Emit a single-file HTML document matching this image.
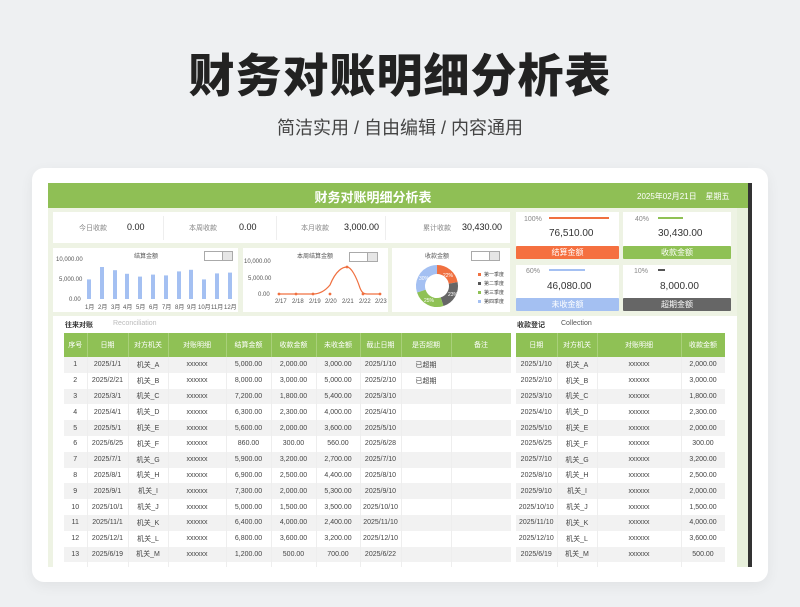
<!DOCTYPE html>
<html><head><meta charset="utf-8"><style>
*{margin:0;padding:0;box-sizing:border-box}
body{width:800px;height:607px;background:#eef0f2;font-family:"Liberation Sans","Noto Sans CJK SC",sans-serif;position:relative;overflow:hidden;color:#333}
.a{position:absolute}
h1{position:absolute;left:0;width:800px;top:40px;text-align:center;font-size:46px;font-weight:900;color:#222;letter-spacing:1px;font-family:"Noto Sans CJK SC",sans-serif}
.sub{position:absolute;left:0;width:800px;top:114px;text-align:center;font-size:18px;color:#444}
.card{left:32px;top:168px;width:736px;height:414px;background:#fff;border-radius:12px;box-shadow:0 4px 14px rgba(0,0,0,.06)}
.sheet{left:48px;top:183px;width:700px;height:384px;background:#eef3e4;overflow:hidden}
.hdr{left:48px;top:183px;width:700px;height:25px;background:#8fbf55;color:#fff}
.wb{background:#fff}
.lbl{font-size:7px;color:#888}
.val{font-size:9px;color:#222}
table{border-collapse:collapse;font-size:7px;color:#444;table-layout:fixed}
th{background:#8fc155;color:#fff;font-weight:normal;height:24px;border-right:1px solid #a9d07a;font-size:7px}
td{height:15.8px;text-align:center;border-right:1px solid #eee;white-space:nowrap}
tr:nth-child(even) td{background:#f2f2f2}
tr:nth-child(odd) td{background:#fff}
.btn{font-size:8px;color:#fff;text-align:center;line-height:13px;border-radius:1px}
.dd{width:29px;height:10px;border:1px solid #aaa;background:#fff}
.dd:after{content:"";position:absolute;right:0;top:0;width:9px;height:8px;background:#e6e6e6;border-left:1px solid #aaa}
</style></head><body>
<h1>财务对账明细分析表</h1>
<div class="sub">简洁实用 / 自由编辑 / 内容通用</div>
<div class="a card"></div>
<div class="a sheet"></div>
<div class="a" style="left:737px;top:208px;width:11px;height:359px;background:#e8f0dc"></div>
<div class="a" style="left:748px;top:183px;width:4px;height:384px;background:#333"></div>
<div class="a hdr"><div class="a" style="left:0;width:650px;top:4px;text-align:center;font-size:13px;font-weight:bold">财务对账明细分析表</div>
<div class="a" style="left:589px;top:8px;font-size:8px">2025年02月21日 &nbsp;&nbsp; 星期五</div></div>

<div class="a wb" style="left:53px;top:212px;width:457px;height:31px"></div>
<div class="a" style="left:163px;top:216px;width:1px;height:24px;background:#eee"></div>
<div class="a" style="left:276px;top:216px;width:1px;height:24px;background:#eee"></div>
<div class="a" style="left:385px;top:216px;width:1px;height:24px;background:#eee"></div>
<div class="a lbl" style="left:79px;top:223px">今日收款</div><div class="a val" style="left:127px;top:222px">0.00</div>
<div class="a lbl" style="left:189px;top:223px">本周收款</div><div class="a val" style="left:239px;top:222px">0.00</div>
<div class="a lbl" style="left:301px;top:223px">本月收款</div><div class="a val" style="left:344px;top:222px">3,000.00</div>
<div class="a lbl" style="left:423px;top:223px">累计收款</div><div class="a val" style="left:462px;top:222px">30,430.00</div>

<div class="a wb" style="left:53px;top:248px;width:185px;height:64px"></div>
<div class="a wb" style="left:243px;top:248px;width:145px;height:64px"></div>
<div class="a wb" style="left:392px;top:248px;width:118px;height:64px"></div>
<div class="a dd" style="left:204px;top:251px"></div>
<div class="a dd" style="left:349px;top:252px"></div>
<div class="a dd" style="left:471px;top:251px"></div>
<svg class="a" style="left:0;top:0" width="800" height="607" font-family="Liberation Sans,Noto Sans CJK SC,sans-serif">
<g font-size="6" fill="#555">
<text x="134" y="258">结算金额</text><text x="297" y="258">本周结算金额</text><text x="425" y="258">收款金额</text>
<text x="56" y="261">10,000.00</text><text x="59" y="281">5,000.00</text><text x="69" y="301">0.00</text>
<text x="244" y="263">10,000.00</text><text x="248" y="280">5,000.00</text><text x="258" y="296">0.00</text>
</g>
<g fill="#a4c0f2">
<rect x="87" y="279.4" width="4" height="19.6"/><rect x="100" y="267" width="4" height="32"/><rect x="113" y="270.2" width="4" height="28.8"/><rect x="125" y="273.8" width="4" height="25.2"/><rect x="138" y="276.6" width="4" height="22.4"/><rect x="151" y="274.6" width="4" height="24.4"/><rect x="164" y="275.4" width="4" height="23.6"/><rect x="177" y="271.4" width="4" height="27.6"/><rect x="189" y="269.8" width="4" height="29.2"/><rect x="202" y="279.4" width="4" height="19.6"/><rect x="215" y="273.4" width="4" height="25.6"/><rect x="228" y="272.6" width="4" height="26.4"/>
</g>
<g font-size="6" fill="#555"><text x="85" y="309">1月</text><text x="98" y="309">2月</text><text x="111" y="309">3月</text><text x="123" y="309">4月</text><text x="136" y="309">5月</text><text x="149" y="309">6月</text><text x="162" y="309">7月</text><text x="175" y="309">8月</text><text x="187" y="309">9月</text><text x="198" y="309">10月</text><text x="211" y="309">11月</text><text x="224" y="309">12月</text></g>
<path d="M279 294 L313 294 C320 294 325 291 330 285 C336 270 343 267 347 267 C351 267 356 276 360 288 C362 293 364 294 367 294 L380 294" fill="none" stroke="#f07040" stroke-width="1.2"/>
<g fill="#f07040"><circle cx="279" cy="294" r="1.4"/><circle cx="296" cy="294" r="1.4"/><circle cx="313" cy="294" r="1.4"/><circle cx="330" cy="294" r="1.4"/><circle cx="347" cy="267" r="1.4"/><circle cx="363" cy="294" r="1.4"/><circle cx="380" cy="294" r="1.4"/></g>
<g font-size="6" fill="#555"><text x="275" y="303">2/17</text><text x="292" y="303">2/18</text><text x="309" y="303">2/19</text><text x="325" y="303">2/20</text><text x="342" y="303">2/21</text><text x="359" y="303">2/22</text><text x="375" y="303">2/23</text></g>
<g fill="none" stroke-width="9">
<circle cx="437" cy="286" r="16.5" stroke="#f07040" stroke-dasharray="22.8 200" transform="rotate(-90 437 286)"/>
<circle cx="437" cy="286" r="16.5" stroke="#666" stroke-dasharray="23.8 200" transform="rotate(-10.8 437 286)"/>
<circle cx="437" cy="286" r="16.5" stroke="#8fc155" stroke-dasharray="25.9 200" transform="rotate(72 437 286)"/>
<circle cx="437" cy="286" r="16.5" stroke="#a4c0f2" stroke-dasharray="31.1 200" transform="rotate(162 437 286)"/>
</g>
<g font-size="5" fill="#fff"><text x="443" y="277">22%</text><text x="448" y="296">23%</text><text x="424" y="302">25%</text><text x="419" y="280">30%</text></g>
<g font-size="5" fill="#444"><text x="484" y="276">第一季度</text><text x="484" y="285">第二季度</text><text x="484" y="294">第三季度</text><text x="484" y="303">第四季度</text></g>
<rect x="478" y="273" width="3" height="3" fill="#f07040"/><rect x="478" y="282" width="3" height="3" fill="#555"/><rect x="478" y="291" width="3" height="3" fill="#8fc155"/><rect x="478" y="300" width="3" height="3" fill="#a4c0f2"/>
</svg>

<div class="a wb" style="left:516px;top:212px;width:103px;height:34px"></div>
<div class="a wb" style="left:623px;top:212px;width:108px;height:34px"></div>
<div class="a wb" style="left:516px;top:265px;width:103px;height:33px"></div>
<div class="a wb" style="left:623px;top:265px;width:108px;height:33px"></div>
<div class="a lbl" style="left:524px;top:216px">100%</div><div class="a" style="left:549px;top:217px;width:60px;height:2px;background:#f07040"></div>
<div class="a lbl" style="left:635px;top:216px">40%</div><div class="a" style="left:658px;top:217px;width:25px;height:2px;background:#8fc155"></div>
<div class="a lbl" style="left:526px;top:268px">60%</div><div class="a" style="left:549px;top:269px;width:36px;height:2px;background:#a4c0f2"></div>
<div class="a lbl" style="left:634px;top:268px">10%</div><div class="a" style="left:658px;top:269px;width:7px;height:2px;background:#555"></div>
<div class="a" style="left:549px;top:228px;font-size:10px">76,510.00</div>
<div class="a" style="left:658px;top:228px;font-size:10px">30,430.00</div>
<div class="a" style="left:547px;top:281px;font-size:10px">46,080.00</div>
<div class="a" style="left:660px;top:281px;font-size:10px">8,000.00</div>
<div class="a btn" style="left:516px;top:246px;width:103px;background:#f57040">结算金额</div>
<div class="a btn" style="left:623px;top:246px;width:108px;background:#8fc155">收款金额</div>
<div class="a btn" style="left:516px;top:298px;width:103px;background:#a4c0f2">未收金额</div>
<div class="a btn" style="left:623px;top:298px;width:108px;background:#666">超期金额</div>

<div class="a wb" style="left:53px;top:316px;width:684px;height:251px"></div>
<div class="a" style="left:65px;top:320px;font-size:7px;font-weight:bold">往来对账</div>
<div class="a" style="left:113px;top:320px;font-size:7px;color:#bbb">Reconciliation</div>
<div class="a" style="left:517px;top:320px;font-size:7px;font-weight:bold">收款登记</div>
<div class="a" style="left:561px;top:320px;font-size:7px;color:#555">Collection</div>

<div class="a" style="left:64px;top:333px;width:447px;height:234px;overflow:hidden">
<table style="width:447px"><colgroup><col style="width:23px"><col style="width:41px"><col style="width:40px"><col style="width:58px"><col style="width:45px"><col style="width:45px"><col style="width:44px"><col style="width:41px"><col style="width:50px"><col style="width:60px"></colgroup>
<tr><th>序号</th><th>日期</th><th>对方机关</th><th>对账明细</th><th>结算金额</th><th>收款金额</th><th>未收金额</th><th>截止日期</th><th>是否超期</th><th>备注</th></tr>
<tr><td>1</td><td>2025/1/1</td><td>机关_A</td><td>xxxxxx</td><td>5,000.00</td><td>2,000.00</td><td>3,000.00</td><td>2025/1/10</td><td>已超期</td><td></td></tr>
<tr><td>2</td><td>2025/2/21</td><td>机关_B</td><td>xxxxxx</td><td>8,000.00</td><td>3,000.00</td><td>5,000.00</td><td>2025/2/10</td><td>已超期</td><td></td></tr>
<tr><td>3</td><td>2025/3/1</td><td>机关_C</td><td>xxxxxx</td><td>7,200.00</td><td>1,800.00</td><td>5,400.00</td><td>2025/3/10</td><td></td><td></td></tr>
<tr><td>4</td><td>2025/4/1</td><td>机关_D</td><td>xxxxxx</td><td>6,300.00</td><td>2,300.00</td><td>4,000.00</td><td>2025/4/10</td><td></td><td></td></tr>
<tr><td>5</td><td>2025/5/1</td><td>机关_E</td><td>xxxxxx</td><td>5,600.00</td><td>2,000.00</td><td>3,600.00</td><td>2025/5/10</td><td></td><td></td></tr>
<tr><td>6</td><td>2025/6/25</td><td>机关_F</td><td>xxxxxx</td><td>860.00</td><td>300.00</td><td>560.00</td><td>2025/6/28</td><td></td><td></td></tr>
<tr><td>7</td><td>2025/7/1</td><td>机关_G</td><td>xxxxxx</td><td>5,900.00</td><td>3,200.00</td><td>2,700.00</td><td>2025/7/10</td><td></td><td></td></tr>
<tr><td>8</td><td>2025/8/1</td><td>机关_H</td><td>xxxxxx</td><td>6,900.00</td><td>2,500.00</td><td>4,400.00</td><td>2025/8/10</td><td></td><td></td></tr>
<tr><td>9</td><td>2025/9/1</td><td>机关_I</td><td>xxxxxx</td><td>7,300.00</td><td>2,000.00</td><td>5,300.00</td><td>2025/9/10</td><td></td><td></td></tr>
<tr><td>10</td><td>2025/10/1</td><td>机关_J</td><td>xxxxxx</td><td>5,000.00</td><td>1,500.00</td><td>3,500.00</td><td>2025/10/10</td><td></td><td></td></tr>
<tr><td>11</td><td>2025/11/1</td><td>机关_K</td><td>xxxxxx</td><td>6,400.00</td><td>4,000.00</td><td>2,400.00</td><td>2025/11/10</td><td></td><td></td></tr>
<tr><td>12</td><td>2025/12/1</td><td>机关_L</td><td>xxxxxx</td><td>6,800.00</td><td>3,600.00</td><td>3,200.00</td><td>2025/12/10</td><td></td><td></td></tr>
<tr><td>13</td><td>2025/6/19</td><td>机关_M</td><td>xxxxxx</td><td>1,200.00</td><td>500.00</td><td>700.00</td><td>2025/6/22</td><td></td><td></td></tr>
<tr><td>&nbsp;</td><td></td><td></td><td></td><td></td><td></td><td></td><td></td><td></td><td></td></tr>
</table></div>

<div class="a" style="left:516px;top:333px;width:209px;height:234px;overflow:hidden">
<table style="width:209px"><colgroup><col style="width:41px"><col style="width:40px"><col style="width:84px"><col style="width:44px"></colgroup>
<tr><th>日期</th><th>对方机关</th><th>对账明细</th><th>收款金额</th></tr>
<tr><td>2025/1/10</td><td>机关_A</td><td>xxxxxx</td><td>2,000.00</td></tr>
<tr><td>2025/2/10</td><td>机关_B</td><td>xxxxxx</td><td>3,000.00</td></tr>
<tr><td>2025/3/10</td><td>机关_C</td><td>xxxxxx</td><td>1,800.00</td></tr>
<tr><td>2025/4/10</td><td>机关_D</td><td>xxxxxx</td><td>2,300.00</td></tr>
<tr><td>2025/5/10</td><td>机关_E</td><td>xxxxxx</td><td>2,000.00</td></tr>
<tr><td>2025/6/25</td><td>机关_F</td><td>xxxxxx</td><td>300.00</td></tr>
<tr><td>2025/7/10</td><td>机关_G</td><td>xxxxxx</td><td>3,200.00</td></tr>
<tr><td>2025/8/10</td><td>机关_H</td><td>xxxxxx</td><td>2,500.00</td></tr>
<tr><td>2025/9/10</td><td>机关_I</td><td>xxxxxx</td><td>2,000.00</td></tr>
<tr><td>2025/10/10</td><td>机关_J</td><td>xxxxxx</td><td>1,500.00</td></tr>
<tr><td>2025/11/10</td><td>机关_K</td><td>xxxxxx</td><td>4,000.00</td></tr>
<tr><td>2025/12/10</td><td>机关_L</td><td>xxxxxx</td><td>3,600.00</td></tr>
<tr><td>2025/6/19</td><td>机关_M</td><td>xxxxxx</td><td>500.00</td></tr>
<tr><td>&nbsp;</td><td></td><td></td><td></td></tr>
</table></div>
</body></html>
